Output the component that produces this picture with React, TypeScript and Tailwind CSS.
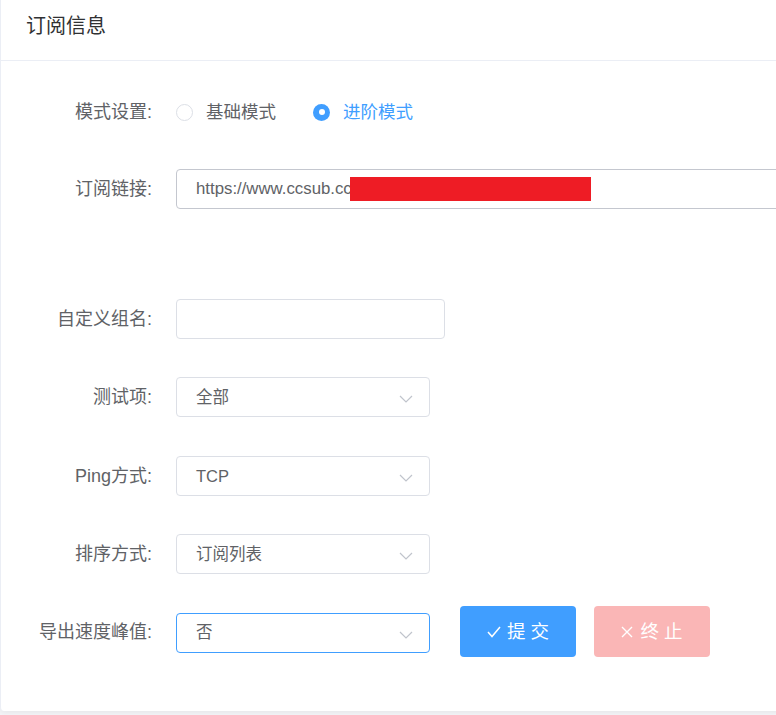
import React from 'react'

const font = { fontFamily: '"Liberation Sans", "Noto Sans CJK SC", sans-serif' }

function Chevron() {
  return (
    <svg width="14" height="8" viewBox="0 0 14 8" className="absolute right-[16px] top-1/2 -translate-y-[2px]">
      <path d="M1 1 L7 7 L13 1" fill="none" stroke="#c0c4cc" strokeWidth="1.2" />
    </svg>
  )
}

function Row({ label, mt, children, h = 'h-[40px]' }: { label: string; mt: string; children: React.ReactNode; h?: string }) {
  return (
    <div className={`flex items-center ${mt} ${h}`}>
      <div className="w-[151px] text-right text-[18px] text-[#606266] shrink-0 whitespace-nowrap">{label}</div>
      <div className="ml-[24px] flex items-center">{children}</div>
    </div>
  )
}

function Select({ value, focused }: { value: string; focused?: boolean }) {
  return (
    <div
      className={`relative w-[254px] h-[40px] rounded-[4px] border bg-white flex items-center pl-[19px] text-[16.5px] text-[#606266] ${
        focused ? 'border-[#409eff]' : 'border-[#dcdfe6]'
      }`}
    >
      {value}
      <Chevron />
    </div>
  )
}

export default function App() {
  return (
    <div className="w-[776px] h-[715px] overflow-hidden bg-[#f4f5f8]" style={font}>
      <div className="w-[1100px] h-[711px] bg-white border-l border-[#ebeef5] rounded-b-[4px] shadow-[0_2px_6px_rgba(0,0,0,0.06)]">
        <div className="h-[61px] border-b border-[#ebeef5] flex items-center pl-[25px] pb-[8px] text-[20px] text-[#303133]">
          订阅信息
        </div>
        <div className="pt-[31px]">
          <Row label="模式设置:" mt="mt-0">
            <div className="flex items-center">
              <span className="w-[17px] h-[17px] rounded-full border border-[#dcdfe6] bg-white" />
              <span className="ml-[13px] text-[17.5px] text-[#606266]">基础模式</span>
              <span className="ml-[37px] w-[17px] h-[17px] rounded-full bg-[#409eff] flex items-center justify-center">
                <span className="w-[6px] h-[6px] rounded-full bg-white" />
              </span>
              <span className="ml-[13px] text-[17.5px] text-[#409eff]">进阶模式</span>
            </div>
          </Row>
          <Row label="订阅链接:" mt="mt-[37px]">
            <div className="w-[900px] h-[40px] rounded-[4px] border border-[#c4c7cf] bg-white flex items-center pl-[19px] text-[16.8px] text-[#606266]">
              https://www.ccsub.cc/
              <span className="-ml-[6px] w-[241px] h-[24px] bg-[#ee1c25]" />
            </div>
          </Row>
          <Row label="自定义组名:" mt="mt-[90px]">
            <div className="w-[269px] h-[40px] rounded-[4px] border border-[#dcdfe6] bg-white" />
          </Row>
          <Row label="测试项:" mt="mt-[38px]">
            <Select value="全部" />
          </Row>
          <Row label="Ping方式:" mt="mt-[39px]">
            <Select value="TCP" />
          </Row>
          <Row label="排序方式:" mt="mt-[38px]">
            <Select value="订阅列表" />
          </Row>
          <Row label="导出速度峰值:" mt="mt-[33px]" h="h-[51px]">
            <Select value="否" focused />
            <button className="ml-[30px] w-[116px] h-[51px] rounded-[4px] bg-[#409eff] text-white text-[18.5px] flex items-center justify-center -translate-y-[1px]">
              <svg width="14" height="12" viewBox="0 0 14 12" className="mr-[6px]">
                <path d="M1 6 L5 10.5 L13 1" fill="none" stroke="#fff" strokeWidth="1.5" />
              </svg>
              提 交
            </button>
            <button className="ml-[18px] w-[116px] h-[51px] rounded-[4px] bg-[#fab6b6] text-white text-[18.5px] flex items-center justify-center -translate-y-[1px]">
              <svg width="12" height="12" viewBox="0 0 12 12" className="mr-[7px]">
                <path d="M1 1 L11 11 M11 1 L1 11" fill="none" stroke="#fff" strokeWidth="1.4" />
              </svg>
              终 止
            </button>
          </Row>
        </div>
      </div>
    </div>
  )
}
